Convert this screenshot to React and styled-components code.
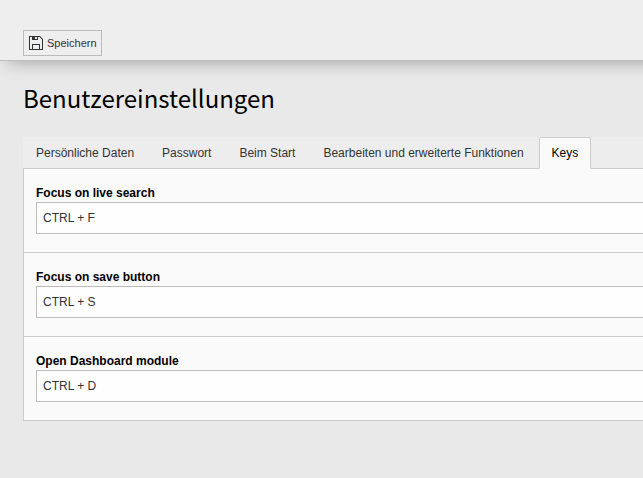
import React from "react";
import styled, { createGlobalStyle } from "styled-components";

const GlobalStyle = createGlobalStyle`
  *, *::before, *::after { box-sizing: border-box; }
  body {
    margin: 0;
    background: #e9e9e9;
    color: #000;
    font: 12px/18px "Liberation Sans", Arial, sans-serif;
  }
`;

const Page = styled.div`
  min-height: 100vh;
  overflow: hidden;
`;

const DocHeader = styled.header`
  margin-right: -40px;
  padding: 30px 23px 4px;
  background: #eee;
  border-bottom: 1px solid #bfbfbf;
  box-shadow: 0 8px 18px -8px rgba(0, 0, 0, 0.35);
`;

const SaveButton = styled.button`
  display: flex;
  align-items: center;
  gap: 3px;
  height: 26px;
  padding: 0 4px;
  border: 1px solid #bbb;
  border-radius: 0;
  background: #eee;
  color: #333;
  font: 11px/16px "Liberation Sans", Arial, sans-serif;
  cursor: pointer;
`;

const Content = styled.main`
  padding-left: 23px;
`;

const Title = styled.h1`
  margin: 0;
  padding: 19px 0 21px;
  font: 400 24px/36px "Noto Sans CJK JP", "Open Sans", sans-serif;
`;

const TabList = styled.div`
  display: flex;
  background: #ededed;
`;

const Tab = styled.button`
  flex: none;
  height: 32px;
  margin: 0 2px -1px 0;
  padding: 0 12px;
  border: 1px solid;
  border-color: ${(p) => (p.$active ? "#ccc #ccc #fafafa" : "transparent transparent #ccc")};
  border-radius: 2px 2px 0 0;
  background: ${(p) => (p.$active ? "#fafafa" : "transparent")};
  color: ${(p) => (p.$active ? "#000" : "#333")};
  font: 12px/18px "Liberation Sans", Arial, sans-serif;
  position: relative;
  cursor: pointer;
`;

const Panel = styled.form`
  border: 1px solid #ccc;
  border-right: 0;
  background: #fafafa;
`;

const Field = styled.div`
  padding: 15px 0 18px 12px;

  & + & {
    border-top: 1px solid #ccc;
  }
`;

const Label = styled.label`
  display: block;
  font-weight: 700;
`;

const TextInput = styled.input`
  display: block;
  width: 100%;
  height: 32px;
  padding: 0 6px;
  border: 1px solid #bbb;
  border-right: 0;
  border-radius: 0;
  background: #fefefe;
  color: #333;
  font: inherit;
`;

const tabs = [
  "Persönliche Daten",
  "Passwort",
  "Beim Start",
  "Bearbeiten und erweiterte Funktionen",
  "Keys",
];

const fields = [
  { id: "live-search", label: "Focus on live search", value: "CTRL + F" },
  { id: "save", label: "Focus on save button", value: "CTRL + S" },
  { id: "dashboard", label: "Open Dashboard module", value: "CTRL + D" },
];

function SaveIcon() {
  return (
    <svg width="16" height="16" viewBox="0 0 16 16" fill="#333" fillRule="evenodd" aria-hidden="true">
      <path d="M1 1h11l3 3v11H1V1zm1 1v12h12V4.4L11.6 2H2z" />
      <path d="M4 1h6v4H4V1zm3 1v2h2V2H7z" />
      <path d="M4 9h8v6H4V9zm1 1v4h6v-4H5z" />
    </svg>
  );
}

export default function App() {
  return (
    <Page>
      <GlobalStyle />
      <DocHeader>
        <SaveButton type="submit" form="settings">
          <SaveIcon />
          Speichern
        </SaveButton>
      </DocHeader>
      <Content>
        <Title>Benutzereinstellungen</Title>
        <TabList role="tablist">
          {tabs.map((name) => (
            <Tab key={name} type="button" role="tab" aria-selected={name === "Keys"} $active={name === "Keys"}>
              {name}
            </Tab>
          ))}
        </TabList>
        <Panel id="settings" onSubmit={(e) => e.preventDefault()}>
          {fields.map((f) => (
            <Field key={f.id}>
              <Label htmlFor={f.id}>{f.label}</Label>
              <TextInput id={f.id} type="text" defaultValue={f.value} />
            </Field>
          ))}
        </Panel>
      </Content>
    </Page>
  );
}
